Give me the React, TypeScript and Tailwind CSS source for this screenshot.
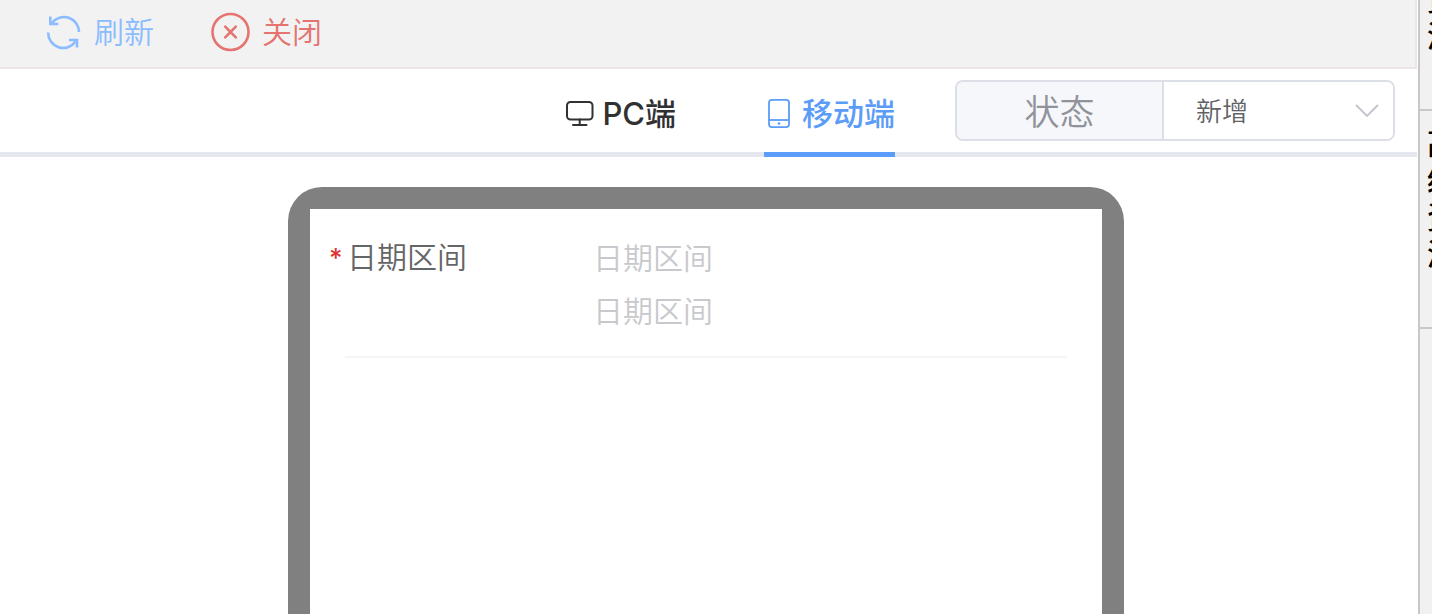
import { useState } from 'react'

const tabs = [
  { key: 'pc', label: 'PC端' },
  { key: 'mobile', label: '移动端' },
]

const sideTabs = [
  { label: '资源', className: 'h-[111px] justify-end pb-[54px]' },
  { label: '高级资源', className: 'h-[218px] pt-[14px]' },
]

function RefreshIcon() {
  return (
    <svg className="h-9 w-9" viewBox="0 0 36 36" fill="none" stroke="currentColor" strokeWidth="2.600">
      <path d="M33 18A15 15 0 0 0 6 9" />
      <path d="M4.300 2.500v7.500h8" />
      <path d="M2.200 18.500A15 15 0 0 0 29.500 27.500" />
      <path d="M23 26h8v7.500" />
    </svg>
  )
}

function CloseIcon() {
  return (
    <svg className="h-10 w-10" viewBox="0 0 40 40" fill="none" stroke="currentColor" strokeWidth="2.600" strokeLinecap="round">
      <circle cx="20.500" cy="20" r="18" />
      <path d="M15.200 14.700l10.600 10.600M25.800 14.700L15.200 25.300" />
    </svg>
  )
}

function MonitorIcon() {
  return (
    <svg className="h-8 w-8" viewBox="0 0 32 32" fill="none" stroke="currentColor" strokeWidth="2" strokeLinecap="round">
      <rect x="3" y="3" width="25.500" height="17.500" rx="3.500" />
      <path d="M15.700 20.500v5M9 26h13.500" />
    </svg>
  )
}

function PhoneIcon() {
  return (
    <svg className="h-8 w-8" viewBox="0 0 32 32" fill="none" stroke="currentColor" strokeWidth="1.800">
      <rect x="5" y="0.900" width="20" height="27.200" rx="2.800" />
      <path d="M5 21h20" />
      <circle cx="15" cy="24.500" r="1.300" fill="currentColor" stroke="none" />
    </svg>
  )
}

export default function App() {
  const [device, setDevice] = useState('mobile')

  return (
    <div className="flex h-screen overflow-hidden bg-white font-['Inter','Noto_Sans_CJK_SC',sans-serif] font-[350]">
      <main className="flex min-w-0 flex-1 flex-col">
        <div className="flex h-[69px] shrink-0 gap-14 border-r-2 border-b-2 border-[#ece6e8] bg-[#f2f2f2] pb-[3px] pl-[46px] text-[30px]">
          <button type="button" className="flex items-center gap-3 text-[#8abcff]">
            <RefreshIcon />
            刷新
          </button>
          <button type="button" className="flex items-center gap-3 text-[#e5736f]">
            <CloseIcon />
            关闭
          </button>
        </div>

        <div className="flex h-[88px] shrink-0 justify-end border-b-[5px] border-[#e4e7ed] pr-[22px]">
          <nav className="-mb-[5px] flex gap-[88px] text-[31px] font-medium">
            {tabs.map((tab) => (
              <button
                key={tab.key}
                type="button"
                onClick={() => setDevice(tab.key)}
                className={`flex items-center gap-[6px] border-b-[5px] pt-2 ${
                  device === tab.key ? 'border-[#5b9cf8] text-[#5b9cf8]' : 'border-transparent text-[#303133]'
                }`}
              >
                {tab.key === 'pc' ? <MonitorIcon /> : <PhoneIcon />}
                {tab.label}
              </button>
            ))}
          </nav>
          <div className="mt-[11px] ml-[60px] flex h-[61px] w-[440px] overflow-hidden rounded-lg border-2 border-[#dcdfe6]">
            <label
              htmlFor="status"
              className="flex w-[207px] items-center justify-center border-r-2 border-[#dcdfe6] bg-[#f5f7fa] pt-1 text-[35px] text-[#909399]"
            >
              状态
            </label>
            <div className="relative flex-1">
              <select id="status" className="h-full w-full appearance-none bg-white px-8 pt-[2px] text-[26px] text-[#606266]">
                <option>新增</option>
              </select>
              <svg
                className="pointer-events-none absolute top-[22px] right-[14px] h-[14px] w-6"
                viewBox="0 0 24 14"
                fill="none"
                stroke="#c0c4cc"
                strokeWidth="1.800"
              >
                <path d="M1 1l11 11L23 1" />
              </svg>
            </div>
          </div>
        </div>

        <div className="flex min-h-0 flex-1 justify-center pt-[30px] pr-[5px]">
          <div className="h-[1200px] w-[836px] rounded-[34px] bg-[#808080] p-[22px]">
            <div className="h-full bg-white px-[35px] pt-[22px] text-[30px]">
              <div className="flex border-b-2 border-[#f5f5f6] pb-[19px]">
                <label htmlFor="start" className="relative w-[248px] pl-[2px] leading-[53px] text-[#646566]">
                  <span className="absolute top-0 -left-4 text-[26px] font-medium text-[#dd3333]">*</span>
                  日期区间
                </label>
                <div className="flex flex-1 flex-col">
                  <input id="start" placeholder="日期区间" className="h-[53px] w-full placeholder-[#c8c9cc] outline-none" />
                  <input aria-label="日期区间" placeholder="日期区间" className="h-[53px] w-full placeholder-[#c8c9cc] outline-none" />
                </div>
              </div>
            </div>
          </div>
        </div>
      </main>

      <aside className="ml-px w-[14px] shrink-0 overflow-hidden border-l-2 border-[#c8c8c8] bg-[#f1f1f1]">
        {sideTabs.map((tab) => (
          <button
            key={tab.label}
            type="button"
            className={`flex w-12 flex-col items-start border-b-2 border-[#c8c8c8] pl-[7px] text-[30px] leading-[37px] font-medium text-black ${tab.className}`}
          >
            {[...tab.label].map((char) => (
              <span key={char}>{char}</span>
            ))}
          </button>
        ))}
      </aside>
    </div>
  )
}
